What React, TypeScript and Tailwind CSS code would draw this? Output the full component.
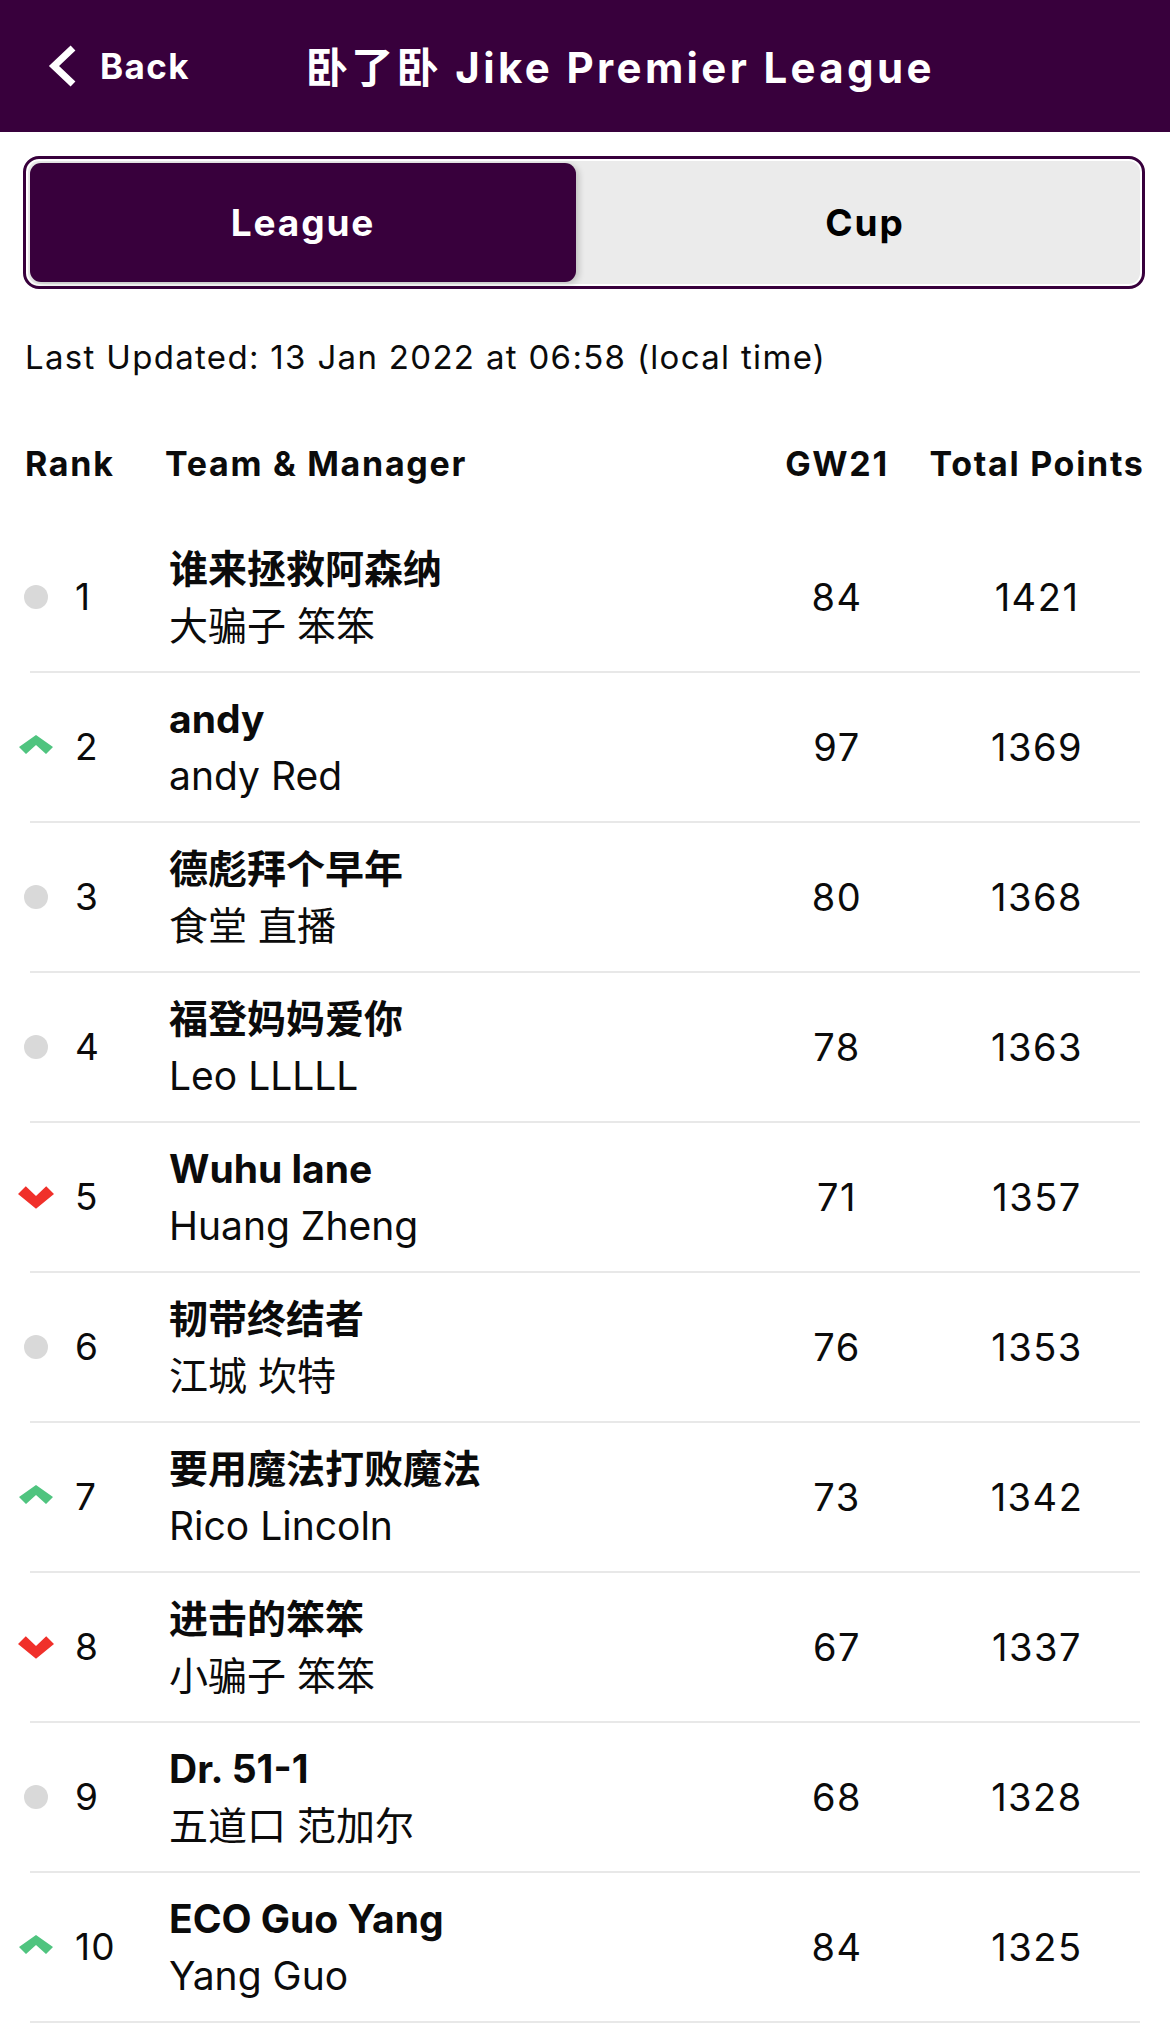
type Move = "up" | "down" | "same";

const rows: { rank: number; move: Move; team: string; manager: string; gw: number; total: number }[] = [
  { rank: 1, move: "same", team: "谁来拯救阿森纳", manager: "大骗子 笨笨", gw: 84, total: 1421 },
  { rank: 2, move: "up", team: "andy", manager: "andy Red", gw: 97, total: 1369 },
  { rank: 3, move: "same", team: "德彪拜个早年", manager: "食堂 直播", gw: 80, total: 1368 },
  { rank: 4, move: "same", team: "福登妈妈爱你", manager: "Leo LLLLL", gw: 78, total: 1363 },
  { rank: 5, move: "down", team: "Wuhu lane", manager: "Huang Zheng", gw: 71, total: 1357 },
  { rank: 6, move: "same", team: "韧带终结者", manager: "江城 坎特", gw: 76, total: 1353 },
  { rank: 7, move: "up", team: "要用魔法打败魔法", manager: "Rico Lincoln", gw: 73, total: 1342 },
  { rank: 8, move: "down", team: "进击的笨笨", manager: "小骗子 笨笨", gw: 67, total: 1337 },
  { rank: 9, move: "same", team: "Dr. 51-1", manager: "五道口 范加尔", gw: 68, total: 1328 },
  { rank: 10, move: "up", team: "ECO Guo Yang", manager: "Yang Guo", gw: 84, total: 1325 },
];

function MoveIcon({ move }: { move: Move }) {
  if (move === "up") {
    return (
      <svg width="34" height="19" viewBox="0 0 34 19" className="-mt-[5px]">
        <polygon points="0,12 17,0 34,12 27,19 17,10 7,19" fill="#4fc47f" />
      </svg>
    );
  }
  if (move === "down") {
    return (
      <svg width="37" height="23" viewBox="0 0 37 23">
        <polygon points="0,8 8,0 18.5,10 29,0 37,8 18.5,23" fill="#f0302a" />
      </svg>
    );
  }
  return <div className="w-[24px] h-[24px] rounded-full bg-[#d9d9d9]" />;
}

export default function App() {
  return (
    <div className="w-[1170px] min-h-[2024px] bg-white text-[#0b0b0b] font-['Inter','Noto_Sans_CJK_SC',sans-serif]">
      {/* top bar */}
      <div className="h-[132px] bg-[#38003c] flex items-center text-white">
        <div className="flex items-center pl-[48px]">
          <svg width="28" height="42" viewBox="0 0 28 42">
            <polyline points="25,3 6,21 25,39" fill="none" stroke="white" strokeWidth="7" />
          </svg>
          <span className="ml-[24px] text-[35px] font-bold leading-none tracking-[0.04em]">Back</span>
        </div>
        <h1 className="ml-[116px] mt-[3px] text-[42px] font-bold leading-none tracking-[0.08em]">卧了卧 Jike Premier League</h1>
      </div>

      {/* league / cup switch */}
      <div className="ml-[23px] mt-[24px] mr-[25px] h-[133px] border-[3px] border-[#38003c] rounded-[16px] bg-[#ebebeb] p-[4px] flex shadow-[inset_0_0_0_2px_white]">
        <div className="w-[546px] h-full rounded-[11px] bg-[#38003c] text-white flex items-center justify-center text-[37px] font-bold tracking-[0.05em] shadow-[3px_2px_6px_rgba(0,0,0,0.18)]">
          League
        </div>
        <div className="flex-1 pl-[16px] flex items-center justify-center text-[37px] font-bold tracking-[0.05em] text-black">Cup</div>
      </div>

      <div className="pt-[46px] pb-[24px] pl-[25px] text-[33px] leading-[44px] tracking-[0.04em]">
        Last Updated: 13 Jan 2022 at 06:58 (local time)
      </div>

      {/* table header */}
      <div className="h-[120px] flex items-center pr-[23px] text-[34px] font-bold tracking-[0.05em] whitespace-nowrap">
        <div className="w-[165px] pl-[25px]">Rank</div>
        <div className="flex-1">Team &amp; Manager</div>
        <div className="w-[120px] text-center">GW21</div>
        <div className="w-[220px] ml-[30px] text-center">Total Points</div>
      </div>

      {rows.map((r) => (
        <div key={r.rank}>
          <div className="h-[148px] flex items-center pr-[23px]">
            <div className="w-[169px] pl-[18px] flex items-center">
              <div className="w-[36px] flex items-center justify-center">
                <MoveIcon move={r.move} />
              </div>
              <span className="ml-[21px] text-[37px] tracking-[0.03em]">{r.rank}</span>
            </div>
            <div className="flex-1 flex flex-col leading-[57px] text-[39px]">
              <span className="font-bold">{r.team}</span>
              <span>{r.manager}</span>
            </div>
            <div className="w-[120px] text-center text-[38px] tracking-[0.04em]">{r.gw}</div>
            <div className="w-[220px] ml-[30px] text-center text-[38px] tracking-[0.04em]">{r.total}</div>
          </div>
          <div className="mx-[30px] h-[2px] bg-[#e8e8e8]" />
        </div>
      ))}
    </div>
  );
}
